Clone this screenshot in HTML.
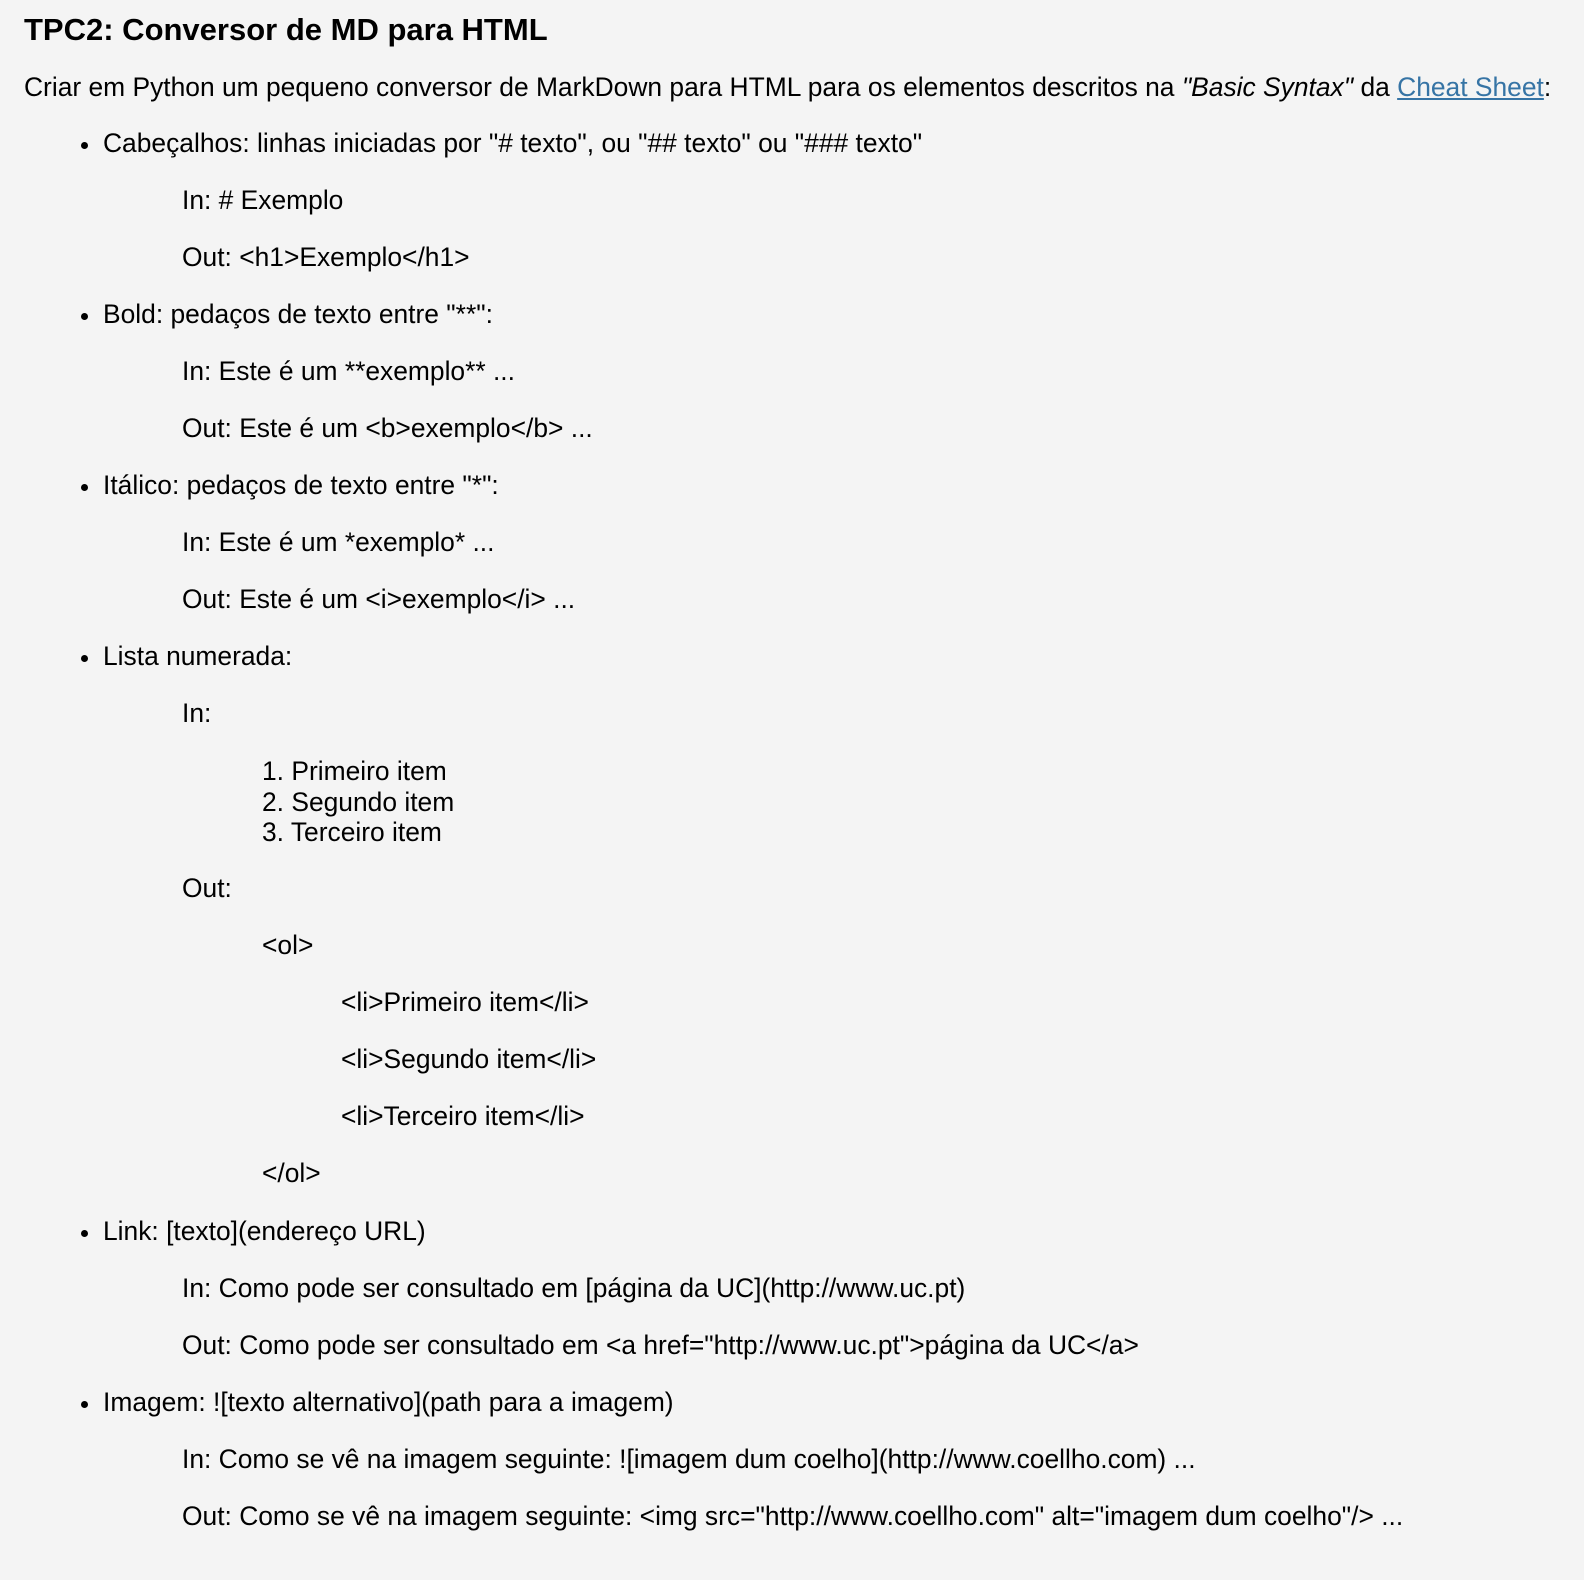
<!DOCTYPE html>
<html><head><meta charset="utf-8"><style>
html,body{margin:0;padding:0;background:#f4f4f4;width:1584px;height:1580px;overflow:hidden}
body{position:relative;font-family:"Liberation Sans",Arial,sans-serif;font-size:26.4px;color:#000}
.l{position:absolute;white-space:pre;line-height:30px}
.b{position:absolute;width:7px;height:7px;border-radius:50%;background:#000;left:81px}
h1{position:absolute;left:24px;top:10px;margin:0;font-size:31px;font-weight:bold;line-height:40px;white-space:pre}
a{color:#3674a5;text-decoration:underline}
</style></head><body>
<h1>TPC2: Conversor de MD para HTML</h1>
<div class="l" style="left:24px;top:72px">Criar em Python um pequeno conversor de MarkDown para HTML para os elementos descritos na <i>"Basic Syntax"</i> da <a>Cheat Sheet</a>:</div>

<div class="b" style="top:142px"></div>
<div class="l" style="left:103px;top:128px">Cabeçalhos: linhas iniciadas por "# texto", ou "## texto" ou "### texto"</div>
<div class="l" style="left:182px;top:185px">In: # Exemplo</div>
<div class="l" style="left:182px;top:242px">Out: &lt;h1&gt;Exemplo&lt;/h1&gt;</div>

<div class="b" style="top:313px"></div>
<div class="l" style="left:103px;top:299px">Bold: pedaços de texto entre "**":</div>
<div class="l" style="left:182px;top:356px">In: Este é um **exemplo** ...</div>
<div class="l" style="left:182px;top:413px">Out: Este é um &lt;b&gt;exemplo&lt;/b&gt; ...</div>

<div class="b" style="top:484px"></div>
<div class="l" style="left:103px;top:470px">Itálico: pedaços de texto entre "*":</div>
<div class="l" style="left:182px;top:527px">In: Este é um *exemplo* ...</div>
<div class="l" style="left:182px;top:584px">Out: Este é um &lt;i&gt;exemplo&lt;/i&gt; ...</div>

<div class="b" style="top:655px"></div>
<div class="l" style="left:103px;top:641px">Lista numerada:</div>
<div class="l" style="left:182px;top:698px">In:</div>
<div class="l" style="left:262px;top:756px">1. Primeiro item</div>
<div class="l" style="left:262px;top:787px">2. Segundo item</div>
<div class="l" style="left:262px;top:817px">3. Terceiro item</div>
<div class="l" style="left:182px;top:873px">Out:</div>
<div class="l" style="left:262px;top:930px">&lt;ol&gt;</div>
<div class="l" style="left:341px;top:987px">&lt;li&gt;Primeiro item&lt;/li&gt;</div>
<div class="l" style="left:341px;top:1044px">&lt;li&gt;Segundo item&lt;/li&gt;</div>
<div class="l" style="left:341px;top:1101px">&lt;li&gt;Terceiro item&lt;/li&gt;</div>
<div class="l" style="left:262px;top:1158px">&lt;/ol&gt;</div>

<div class="b" style="top:1230px"></div>
<div class="l" style="left:103px;top:1216px">Link: [texto](endereço URL)</div>
<div class="l" style="left:182px;top:1273px">In: Como pode ser consultado em [página da UC](http://www.uc.pt)</div>
<div class="l" style="left:182px;top:1330px">Out: Como pode ser consultado em &lt;a href="http://www.uc.pt"&gt;página da UC&lt;/a&gt;</div>

<div class="b" style="top:1401px"></div>
<div class="l" style="left:103px;top:1387px">Imagem: ![texto alternativo](path para a imagem)</div>
<div class="l" style="left:182px;top:1444px">In: Como se vê na imagem seguinte: ![imagem dum coelho](http://www.coellho.com) ...</div>
<div class="l" style="left:182px;top:1501px">Out: Como se vê na imagem seguinte: &lt;img src="http://www.coellho.com" alt="imagem dum coelho"/&gt; ...</div>
</body></html>
